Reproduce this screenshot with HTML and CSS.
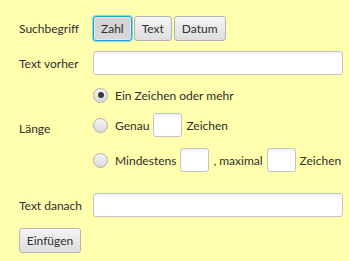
FILE: index.html
```html
<!DOCTYPE html>
<html lang="de">
<head>
<meta charset="utf-8">
<link rel="stylesheet" href="styles.css">
</head>
<body>
<div class="form">
  <div class="row r-search">
    <span class="label">Suchbegriff</span>
    <div class="toggles">
      <button class="btn selected">Zahl</button>
      <button class="btn">Text</button>
      <button class="btn">Datum</button>
    </div>
  </div>
  <div class="row r-before">
    <span class="label">Text vorher</span>
    <input class="field wide" type="text">
  </div>
  <div class="row r-length">
    <span class="label">Länge</span>
    <div class="options">
      <div class="opt opt1"><span class="radio checked"></span><span>Ein Zeichen oder mehr</span></div>
      <div class="opt opt2"><span class="radio"></span><span>Genau</span><input class="field small" type="text"><span>Zeichen</span></div>
      <div class="opt opt3"><span class="radio"></span><span>Mindestens</span><input class="field small" type="text"><span>, maximal</span><input class="field small" type="text"><span>Zeichen</span></div>
    </div>
  </div>
  <div class="row r-after">
    <span class="label">Text danach</span>
    <input class="field wide" type="text">
  </div>
  <div class="row r-insert">
    <button class="btn insert">Einfügen</button>
  </div>
</div>
</body>
</html>
```
FILE: styles.css
```css
html, body {
  margin: 0;
  padding: 0;
  background: #ffffae;
}
body {
  font-family: Lato, "Noto Sans", sans-serif;
  font-size: 12px;
  color: #2e2e2e;
  width: 349px;
  height: 261px;
  overflow: hidden;
}
.form {
  display: flex;
  flex-direction: column;
  padding: 16px 0 0 19px;
}
.row {
  display: flex;
  align-items: center;
  white-space: nowrap;
}
.label {
  width: 74px;
  flex: none;
}
.toggles {
  display: flex;
  gap: 2px;
}
.btn {
  font: inherit;
  color: #2e2e2e;
  height: 25px;
  padding: 0 7px;
  border: 1px solid #b3b3b3;
  border-radius: 3px;
  background: linear-gradient(#f4f4f4, #dedede);
  box-shadow: inset 0 1px 0 #fbfbfb;
  margin: 0;
}
.btn.selected {
  background: linear-gradient(#d2d2d2, #d8d8d8);
  border-color: #1ba3d6;
  box-shadow: 0 0 0 1px #8fd3ec, inset 0 0 0 1px #e8e8e8;
}
.field {
  box-sizing: border-box;
  height: 24px;
  border: 1px solid #c4c4c4;
  border-radius: 3px;
  background: linear-gradient(#f0f0f0, #ffffff 4px);
  margin: 0;
  padding: 0 4px;
  font: inherit;
  flex: none;
}
.wide {
  width: 250px;
}
.small {
  width: 29px;
}
.r-before { margin-top: 10px; }
.r-length { margin-top: 10px; }
.options {
  display: flex;
  flex-direction: column;
}
.opt {
  display: flex;
  align-items: center;
  gap: 4px;
}
.opt span { flex: none; }
.opt1 { height: 20px; }
.opt2 { margin-top: 8px; }
.opt3 { margin-top: 11px; }
.radio {
  box-sizing: border-box;
  width: 15px;
  height: 15px;
  border-radius: 50%;
  border: 1px solid #b0b0b0;
  background: linear-gradient(#f6f6f6, #d9d9d9);
  margin-right: 3px;
  display: flex;
  align-items: center;
  justify-content: center;
}
.radio.checked::after {
  content: "";
  width: 6px;
  height: 6px;
  border-radius: 50%;
  background: #3a3a3a;
}
.r-after { margin-top: 21px; }
.r-insert { margin-top: 11px; }
.insert {
  width: 62px;
  padding: 0;
}
```
